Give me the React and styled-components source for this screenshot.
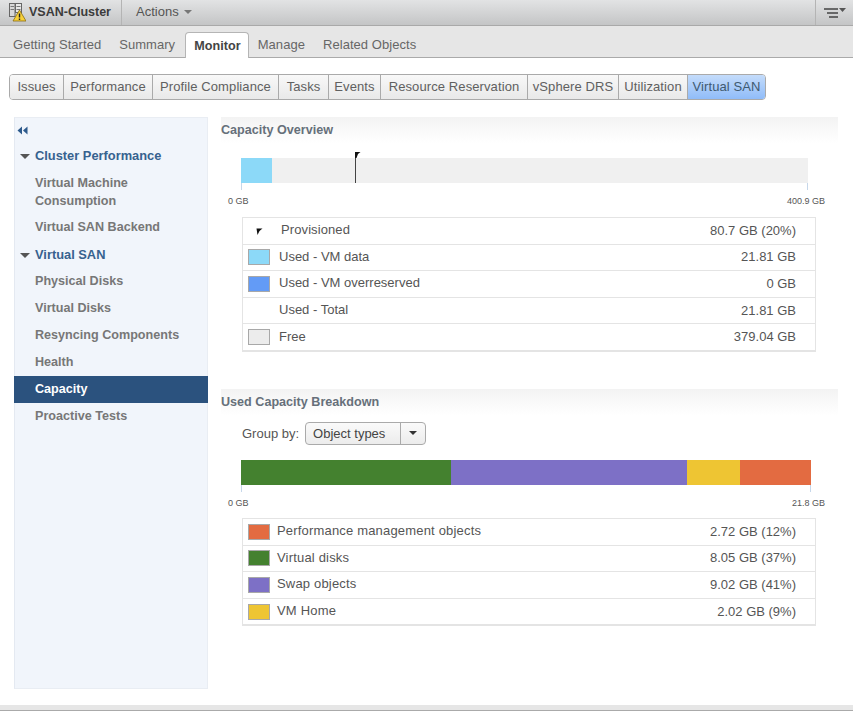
import React from "react";
import styled, { createGlobalStyle } from "styled-components";

const GlobalStyle = createGlobalStyle`
	html, body {
		margin: 0;
		padding: 0;
		background: #fff;
		font-family: "Liberation Sans", Arial, sans-serif;
		font-size: 13px;
		color: #555;
	}
`;

const mainTabs = ["Getting Started", "Summary", "Monitor", "Manage", "Related Objects"];
const subTabs = [
	["Issues", 54],
	["Performance", 89],
	["Profile Compliance", 126],
	["Tasks", 50],
	["Events", 52],
	["Resource Reservation", 147],
	["vSphere DRS", 91],
	["Utilization", 69],
	["Virtual SAN", 77],
];

const overviewRows = [
	{ label: "Provisioned", value: "80.7 GB (20%)", marker: true },
	{ label: "Used - VM data", value: "21.81 GB", color: "#8cd9f8" },
	{ label: "Used - VM overreserved", value: "0 GB", color: "#639bf6" },
	{ label: "Used - Total", value: "21.81 GB", blank: true },
	{ label: "Free", value: "379.04 GB", color: "#ececec" },
];

const breakdownRows = [
	{ label: "Performance management objects", value: "2.72 GB (12%)", color: "#e36b41" },
	{ label: "Virtual disks", value: "8.05 GB (37%)", color: "#44812f" },
	{ label: "Swap objects", value: "9.02 GB (41%)", color: "#7d70c6" },
	{ label: "VM Home", value: "2.02 GB (9%)", color: "#eec533" },
];

const segments = [
	["#44812f", 210],
	["#7d70c6", 236],
	["#eec533", 53],
	["#e36b41", 71],
];

function ClusterIcon() {
	return (
		<svg width="18" height="20" viewBox="0 0 18 20">
			<rect x="1.5" y="1.5" width="5.5" height="13" fill="#d8d8d8" stroke="#666" />
			<rect x="7.5" y="1.5" width="6" height="9" fill="#e8e8e8" stroke="#666" />
			<path d="M2.5 4.5h3.5M2.5 7.5h3.5M8.5 4.5h4M8.5 7.5h4" stroke="#777" />
			<path d="M11.5 8 L18 19 H5 Z" fill="#f7d038" stroke="#8a6d10" strokeWidth="0.8" />
			<path d="M11.5 11.5v4M11.5 16.5v1.5" stroke="#222" strokeWidth="1.4" />
		</svg>
	);
}

function ListMenuIcon() {
	return (
		<svg width="24" height="12" viewBox="0 0 24 12">
			<path d="M1 2h14M4 6h11M6 10h9" stroke="#444" strokeWidth="1.6" />
			<path d="M16 1h7l-3.5 4z" fill="#555" />
		</svg>
	);
}

function Collapse() {
	return (
		<svg width="11" height="9" viewBox="0 0 11 9">
			<path d="M5 0.5v8L0.5 4.5zM10.5 0.5v8L6 4.5z" fill="#2d5a8c" />
		</svg>
	);
}

function Section({ title, children }) {
	return (
		<SectionBlock>
			<SectionHead>{title}</SectionHead>
			{children}
		</SectionBlock>
	);
}

function Legend({ rows, tight }) {
	return (
		<LegendTable>
			{rows.map((row) => (
				<LegendRow key={row.label}>
					{row.marker ? (
						<MarkerSlot>
							<svg width="7" height="7" viewBox="0 0 7 7">
								<path d="M0.5 0.5h6l-3 2.5-2 4z" fill="#111" />
							</svg>
						</MarkerSlot>
					) : row.blank ? (
						<Swatch $blank />
					) : (
						<Swatch $color={row.color} />
					)}
					<LegendLabel $marker={row.marker} $tight={tight}>
						{row.label}
					</LegendLabel>
					<LegendValue>{row.value}</LegendValue>
				</LegendRow>
			))}
		</LegendTable>
	);
}

export default function App() {
	return (
		<>
			<GlobalStyle />
			<Page>
				<TopBar>
					<Title>
						<ClusterIcon />
						<span>VSAN-Cluster</span>
					</Title>
					<Actions>
						Actions <Caret />
					</Actions>
					<MenuButton>
						<ListMenuIcon />
					</MenuButton>
				</TopBar>
				<TabStrip>
					{mainTabs.map((tab) => (
						<MainTab key={tab} $active={tab === "Monitor"}>
							{tab}
						</MainTab>
					))}
				</TabStrip>
				<SubTabs>
					{subTabs.map(([tab, width]) => (
						<SubTab key={tab} $width={width} $active={tab === "Virtual SAN"}>
							{tab}
						</SubTab>
					))}
				</SubTabs>
				<Body>
					<Sidebar>
						<CollapseRow>
							<Collapse />
						</CollapseRow>
						<Group>Cluster Performance</Group>
						<NavItem $tall>Virtual Machine Consumption</NavItem>
						<NavItem>Virtual SAN Backend</NavItem>
						<Group>Virtual SAN</Group>
						<NavItem>Physical Disks</NavItem>
						<NavItem>Virtual Disks</NavItem>
						<NavItem>Resyncing Components</NavItem>
						<NavItem>Health</NavItem>
						<NavItem $active>Capacity</NavItem>
						<NavItem>Proactive Tests</NavItem>
					</Sidebar>
					<Content>
						<Section title="Capacity Overview">
							<ChartWrap $width={567}>
								<Track>
									<Fill $width={31} $color="#8cd9f8" />
									<Marker>
										<svg width="6" height="6" viewBox="0 0 6 6">
											<path d="M0 0h5.5l-2.5 2-1.5 4H0z" fill="#111" />
										</svg>
									</Marker>
								</Track>
								<Ticks />
								<Scale $height={21} $right={17}>
									<span>0 GB</span>
									<span>400.9 GB</span>
								</Scale>
							</ChartWrap>
							<Legend rows={overviewRows} />
						</Section>
						<Section title="Used Capacity Breakdown">
							<GroupBy>
								<span>Group by:</span>
								<Select>
									<SelectText>Object types</SelectText>
									<SelectArrow>
										<Caret $dark />
									</SelectArrow>
								</Select>
							</GroupBy>
							<ChartWrap $width={570}>
								<Track>
									{segments.map(([color, width]) => (
										<Fill key={color} $width={width} $color={color} />
									))}
								</Track>
								<Ticks />
								<Scale $height={20} $right={14}>
									<span>0 GB</span>
									<span>21.8 GB</span>
								</Scale>
							</ChartWrap>
							<Legend rows={breakdownRows} tight />
						</Section>
					</Content>
				</Body>
				<Footer />
			</Page>
		</>
	);
}

const Page = styled.div`
	width: 853px;
	height: 711px;
	display: flex;
	flex-direction: column;
	overflow: hidden;
`;

const TopBar = styled.div`
	height: 25px;
	flex: none;
	display: flex;
	align-items: center;
	background: linear-gradient(#e2e3e4, #c4c5c6);
	border-bottom: 1px solid #a9a9a9;
`;

const Title = styled.div`
	display: flex;
	align-items: center;
	gap: 3px;
	width: 122px;
	height: 100%;
	padding: 0 0 1px 8px;
	box-sizing: border-box;
	border-right: 1px solid #b4b4b4;
	font-size: 12.5px;
	font-weight: bold;
	color: #3c3c3c;
	white-space: nowrap;
`;

const Actions = styled.div`
	padding: 0 0 2px 14px;
	color: #555;
	font-size: 13px;
	display: flex;
	align-items: center;
	gap: 5px;
`;

const Caret = styled.span`
	width: 0;
	height: 0;
	border-left: 4px solid transparent;
	border-right: 4px solid transparent;
	border-top: 4px solid ${({ $dark }) => ($dark ? "#333" : "#777")};
`;

const MenuButton = styled.div`
	margin-left: auto;
	width: 38px;
	height: 100%;
	box-sizing: border-box;
	border-left: 1px solid #b4b4b4;
	display: flex;
	align-items: center;
	justify-content: center;
`;

const TabStrip = styled.div`
	height: 31px;
	flex: none;
	display: flex;
	align-items: flex-end;
	padding-left: 4px;
	background: #e6e6e6;
	border-bottom: 1px solid #aaa;
`;

const MainTab = styled.div`
	box-sizing: border-box;
	height: ${({ $active }) => ($active ? "26px" : "25px")};
	padding: ${({ $active }) => ($active ? "0 7px 0 8px" : "0 9px")};
	margin: ${({ $active }) => ($active ? "0 0 -1px 1px" : "0")};
	display: flex;
	align-items: center;
	color: ${({ $active }) => ($active ? "#444" : "#666")};
	font-weight: ${({ $active }) => ($active ? "bold" : "normal")};
	font-size: ${({ $active }) => ($active ? "12.6px" : "13px")};
	letter-spacing: 0.05px;
	background: ${({ $active }) => ($active ? "#fff" : "transparent")};
	border: ${({ $active }) => ($active ? "1px solid #b5b5b5" : "none")};
	border-bottom: none;
	border-radius: 4px 4px 0 0;
`;

const SubTabs = styled.div`
	flex: none;
	display: flex;
	height: 26px;
	margin: 16px 0 17px 9px;
	align-self: flex-start;
	box-sizing: border-box;
	border: 1px solid #aaa;
	border-radius: 4px;
	overflow: hidden;
`;

const SubTab = styled.div`
	box-sizing: border-box;
	width: ${({ $width }) => $width}px;
	display: flex;
	align-items: center;
	justify-content: center;
	font-size: 13px;
	letter-spacing: 0.1px;
	padding-bottom: 1px;
	color: ${({ $active }) => ($active ? "#405a70" : "#606060")};
	background: ${({ $active }) =>
		$active ? "linear-gradient(#c4dcfb, #90bcf9)" : "linear-gradient(#f8f8f8, #e9e9e9)"};
	white-space: nowrap;
	&:not(:last-child) {
		border-right: 1px solid #aaa;
	}
`;

const Body = styled.div`
	flex: 1;
	min-height: 0;
	display: flex;
	padding-left: 14px;
`;

const Sidebar = styled.div`
	width: 194px;
	height: 572px;
	flex: none;
	box-sizing: border-box;
	background: #f1f5fb;
	border: 1px solid #e9edf3;
	border-left-color: #e4e9f1;
`;

const CollapseRow = styled.div`
	height: 24px;
	padding-left: 2px;
	display: flex;
	align-items: center;
`;

const Group = styled.div`
	position: relative;
	height: 27px;
	display: flex;
	align-items: center;
	padding-left: 20px;
	font-weight: bold;
	font-size: 12.85px;
	color: #37628f;
	&::before {
		content: "";
		position: absolute;
		left: 5px;
		top: 12px;
		border-left: 5px solid transparent;
		border-right: 5px solid transparent;
		border-top: 5px solid #555;
	}
`;

const NavItem = styled.div`
	min-height: 27px;
	box-sizing: border-box;
	padding: ${({ $tall }) => ($tall ? "5px 30px 4px 21px" : "0 8px 2px 21px")};
	margin-left: -1px;
	margin-right: -1px;
	display: flex;
	align-items: center;
	line-height: 18px;
	font-weight: bold;
	font-size: 12.6px;
	color: ${({ $active }) => ($active ? "#fff" : "#777")};
	background: ${({ $active }) => ($active ? "#2b527e" : "transparent")};
`;

const Content = styled.div`
	width: 617px;
	margin-left: 13px;
	flex: none;
	display: flex;
	flex-direction: column;
	gap: 37px;
`;

const SectionBlock = styled.section`
	display: flex;
	flex-direction: column;
`;

const SectionHead = styled.h2`
	margin: 0;
	height: 26px;
	display: flex;
	align-items: center;
	font-size: 12.6px;
	font-weight: bold;
	color: #66707a;
	background: linear-gradient(#f3f3f3, #fff);
`;

const ChartWrap = styled.div`
	margin: 15px 0 0 20px;
	width: ${({ $width }) => $width}px;
`;

const Track = styled.div`
	position: relative;
	display: flex;
	height: 25px;
	background: #f0f0f0;
`;

const Fill = styled.div`
	width: ${({ $width }) => $width}px;
	background: ${({ $color }) => $color};
`;

const Marker = styled.div`
	position: absolute;
	left: 114px;
	top: -6px;
	bottom: 0;
	border-left: 1px solid #444;
	display: flex;
	& > svg {
		margin-left: -1px;
	}
`;

const Ticks = styled.div`
	height: 7px;
	border-left: 1px solid #c6d7ea;
	border-right: 1px solid #c6d7ea;
`;

const Scale = styled.div`
	display: flex;
	justify-content: space-between;
	margin: 6px -${({ $right }) => $right}px 0 -13px;
	height: ${({ $height }) => $height}px;
	font-size: 9px;
	color: #555;
`;

const LegendTable = styled.div`
	margin-left: 21px;
	width: 574px;
	box-sizing: border-box;
	border: 1px solid #e4e4e4;
	border-bottom-width: 2px;
`;

const LegendRow = styled.div`
	height: 25.6px;
	display: flex;
	align-items: center;
	padding: 0 19px 0 5px;
	font-size: 13px;
	color: #555;
	&:not(:last-child) {
		border-bottom: 1px solid #e4e4e4;
	}
`;

const MarkerSlot = styled.div`
	width: 22px;
	display: flex;
	justify-content: center;
	padding-top: 2px;
`;

const Swatch = styled.span`
	box-sizing: border-box;
	width: 22px;
	height: 16px;
	flex: none;
	background: ${({ $color, $blank }) => ($blank ? "transparent" : $color)};
	border: ${({ $blank }) => ($blank ? "none" : "1px solid #a8a8a8")};
`;

const LegendLabel = styled.span`
	margin-left: ${({ $marker, $tight }) => ($marker ? "11px" : $tight ? "7px" : "9px")};
	padding-bottom: 2px;
	letter-spacing: ${({ $tight, $marker }) => ($tight ? "0.18px" : $marker ? "0.1px" : "0")};
`;

const LegendValue = styled.span`
	margin-left: auto;
	padding-bottom: 1px;
`;

const GroupBy = styled.div`
	margin: 7px 0 0 21px;
	display: flex;
	align-items: center;
	gap: 6px;
	height: 23px;
	font-size: 13px;
	color: #555;
`;

const Select = styled.div`
	display: flex;
	width: 121px;
	height: 23px;
	box-sizing: border-box;
	border: 1px solid #aaa;
	border-radius: 4px;
	background: linear-gradient(#fafafa, #ececec);
	color: #444;
`;

const SelectText = styled.div`
	flex: 1;
	padding-left: 7px;
	display: flex;
	align-items: center;
	border-right: 1px solid #aaa;
`;

const SelectArrow = styled.div`
	width: 24px;
	display: flex;
	align-items: center;
	justify-content: center;
`;

const Footer = styled.div`
	height: 6px;
	flex: none;
	box-sizing: border-box;
	background: #e6e6e6;
	border-bottom: 1px solid #aaa;
`;
